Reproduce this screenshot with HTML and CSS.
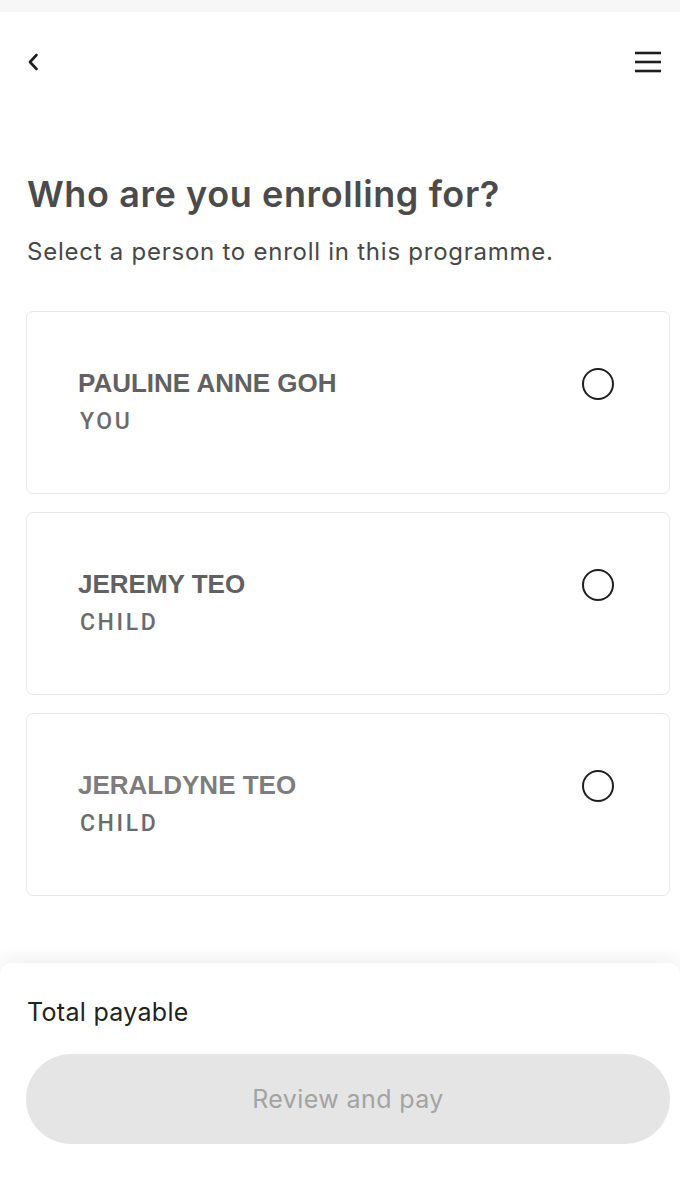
FILE: index.html
```html
<!DOCTYPE html>
<html lang="en">
<head>
<meta charset="utf-8">
<title>Who are you enrolling for?</title>
<link rel="stylesheet" href="styles.css">
</head>
<body>
<div class="statusbar"></div>
<header class="topbar">
  <button class="icon-btn" aria-label="Back">
    <svg width="14" height="18" viewBox="0 0 14 18"><path d="M10.5 2 L4 9 L10.5 16" fill="none" stroke="#1e1e1e" stroke-width="2.6" stroke-linecap="round" stroke-linejoin="round"/></svg>
  </button>
  <button class="icon-btn" aria-label="Menu">
    <svg width="28" height="22" viewBox="0 0 28 22"><g stroke="#1e1e1e" stroke-width="2.6" stroke-linecap="butt"><line x1="1" y1="2" x2="27" y2="2"/><line x1="1" y1="11" x2="27" y2="11"/><line x1="1" y1="20" x2="27" y2="20"/></g></svg>
  </button>
</header>
<main class="content">
  <h1 class="title">Who are you enrolling for?</h1>
  <p class="subtitle">Select a person to enroll in this programme.</p>
  <div class="list">
    <label class="card">
      <div class="card-info">
        <span class="name">PAULINE ANNE GOH</span>
        <span class="role">YOU</span>
      </div>
      <span class="radio"></span>
    </label>
    <label class="card">
      <div class="card-info">
        <span class="name">JEREMY TEO</span>
        <span class="role">CHILD</span>
      </div>
      <span class="radio"></span>
    </label>
    <label class="card">
      <div class="card-info">
        <span class="name name-light">JERALDYNE TEO</span>
        <span class="role">CHILD</span>
      </div>
      <span class="radio"></span>
    </label>
  </div>
</main>
<footer class="paybar">
  <div class="total">Total payable</div>
  <button class="pay-btn" disabled>Review and pay</button>
</footer>
</body>
</html>
```

FILE: styles.css
```css
* { box-sizing: border-box; }
html, body { margin: 0; padding: 0; }
body {
  background: #ffffff;
  font-family: "Inter", "Liberation Sans", sans-serif;
  width: 680px;
  min-height: 1178px;
  display: flex;
  flex-direction: column;
  overflow: hidden;
}
.statusbar {
  height: 12px;
  background: #f7f7f7;
}
.topbar {
  height: 100px;
  display: flex;
  align-items: center;
  justify-content: space-between;
  padding: 0 18px 0 26px;
}
.icon-btn {
  border: 0;
  background: none;
  padding: 0;
  display: flex;
  align-items: center;
}
.content {
  padding: 0 10px 0 26px;
}
.title {
  margin: 60px 0 0 1px;
  font-size: 36px;
  line-height: 44px;
  font-weight: 600;
  color: #4b4b4b;
  letter-spacing: 0.6px;
}
.subtitle {
  margin: 21px 0 0 1px;
  font-size: 24px;
  line-height: 30px;
  font-weight: 400;
  color: #474747;
  letter-spacing: 0.75px;
}
.list {
  margin-top: 44px;
  display: flex;
  flex-direction: column;
  gap: 18px;
}
.card {
  height: 183px;
  border: 1.5px solid #e8e8e8;
  border-radius: 7px;
  display: flex;
  align-items: flex-start;
  justify-content: space-between;
  padding: 56px 55px 0 51px;
}
.card-info {
  display: flex;
  flex-direction: column;
  gap: 11px;
}
.name {
  font-family: "Liberation Sans", Arial, sans-serif;
  font-weight: 700;
  font-size: 26px;
  line-height: 30px;
  color: #616161;
}
.name-light { color: #7d7d7d; }
.role {
  font-family: "Roboto", "Liberation Sans", sans-serif;
  font-weight: 500;
  font-size: 23px;
  line-height: 26px;
  letter-spacing: 2.6px;
  color: #6c6c6c;
  padding-left: 2px;
}
.radio {
  width: 32px;
  height: 32px;
  border: 2.6px solid #1f1f1f;
  border-radius: 50%;
  margin-top: 0;
  flex: none;
}
.paybar {
  margin-top: auto;
  height: 215px;
  background: #ffffff;
  border-radius: 12px 12px 0 0;
  box-shadow: 0 -6px 18px rgba(0, 0, 0, 0.06);
  padding: 33px 10px 0 26px;
}
.total {
  font-size: 25px;
  line-height: 32px;
  letter-spacing: 0.3px;
  color: #222222;
  padding-left: 1px;
}
.pay-btn {
  margin-top: 26px;
  width: 100%;
  height: 90px;
  border: 0;
  border-radius: 45px;
  background: #e5e5e5;
  color: #a3a3a3;
  font-family: "Inter", "Liberation Sans", sans-serif;
  font-size: 25px;
  letter-spacing: 0.4px;
}
```
